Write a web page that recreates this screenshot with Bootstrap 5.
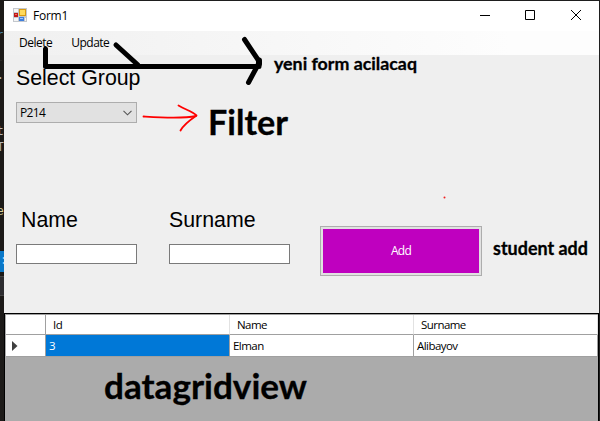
<!DOCTYPE html>
<html lang="az">
<head>
<meta charset="utf-8">
<meta name="viewport" content="width=device-width, initial-scale=1">
<title>Form1</title>
<link rel="stylesheet" href="https://cdn.jsdelivr.net/npm/bootstrap@5.3.0/dist/css/bootstrap.min.css">
<style>
body{width:600px;height:421px;background:#1e1e1e;color:#000;font-family:"Open Sans","Noto Sans",sans-serif;font-size:12px;line-height:16px}
.editor-strip{width:4px;padding-top:28px;background:#1c1a18;font:12px/16px "Liberation Mono",monospace;color:#b8b8b8}
.strip-line{height:16px;direction:rtl;overflow:hidden}
.strip-sel{height:21px;margin-top:31px;background:#0a78c8;color:#9cf;line-height:20px;overflow:hidden}
.strip-panel{height:20px;margin-top:4px;background:#2d2d30;border-top:1px solid #444;border-bottom:1px solid #444}
.win{width:595px;height:420px;margin-top:1px;background:#efefef}
.title-row{height:30px;padding:0 0 2px 9px}
.title-text{margin-left:6px;padding-top:1px;letter-spacing:-.25px}
.caption-btn{width:46px;height:28px}
.caption-btn:first-child{width:44px}
.menu-row{height:24px;padding-left:15px;background:linear-gradient(90deg,#f0f0f0,#fdfdfd 85%)}
.menu-row a{color:#000;letter-spacing:-.5px}
.menu-row a+a{margin-left:19px}
.form-area{height:258px;padding:10px 0 0 12px}
.lbl{font:21.33px/26px "Liberation Sans",Arial,sans-serif}
.combo{width:121px;height:21px;margin-top:11px;padding:0 4px 0 3px;background:#e1e1e1;border:1px solid #adadad;letter-spacing:-.65px}
.fields-row{margin-top:84px}
.field-col{width:121px}
.txt{display:block;width:121px;height:20px;margin-top:11px;border:1px solid #7a7a7a;background:#fff;padding:0}
.add-btn{width:162px;height:50px;margin:19px 0 0 30px;border:1px solid #adadad;border-radius:0;padding:2px;background:#e1e1e1}
.add-btn span{background:#bf00bf;color:#fff;font-size:12px;letter-spacing:-.8px}
.data-view{height:108px;background:#ababab;border:1px solid #000;border-bottom:0;padding-top:1px;box-shadow:inset 0 1px #a0a0a0}
.data-view table{width:592px;margin:0 0 0 1px;table-layout:fixed;border-collapse:separate;border-spacing:0;font-size:11.5px;letter-spacing:-.55px;background:#fff}
.data-view th,.data-view td{padding:0;font-weight:400;border:0 solid #a0a0a0;border-bottom-width:1px;line-height:19px}
.data-view th{height:20px;padding-left:7px;border-right:1px solid #e2e2e2}
.data-view th:first-child{border-right-color:#a0a0a0}
.data-view td{height:22px;line-height:21px;padding-left:3px;border-right-width:1px}
.data-view .row-mark{padding-left:6px}
.data-view .picked{background:#0078d7;color:#fff}
.notes{left:0;top:0;pointer-events:none}
.notes text{font-family:Lato,"Open Sans",sans-serif;font-weight:700;stroke:#000;stroke-width:.3px}
</style>
<script src="https://cdn.jsdelivr.net/npm/bootstrap@5.3.0/dist/js/bootstrap.bundle.min.js"></script>
</head>
<body class="d-flex position-relative overflow-hidden">
<aside class="editor-strip h-100 overflow-hidden flex-shrink-0">
  <div class="strip-line" style="color:#4d83a3">r</div>
  <div class="strip-line"></div>
  <div class="strip-line" style="line-height:0">-</div>
  <div class="strip-line" style="line-height:0">.</div>
  <div class="strip-line"></div><div class="strip-line"></div>
  <div class="strip-line">t</div>
  <div class="strip-line">T</div>
  <div class="strip-line"></div><div class="strip-line"></div><div class="strip-line"></div>
  <div class="strip-line" style="color:#d8cf9c">e</div>
  <div class="strip-sel">:</div>
  <div class="strip-panel"></div>
</aside>
<main class="win flex-shrink-0">
  <header class="title-row d-flex align-items-center bg-white">
    <svg width="14" height="14" viewBox="0 0 14 14"><path d="M0 0H14V14H0Z" fill="#c4c8cd"/><path d="M1 1H5V4H1ZM1 10H5V13H1ZM12 10H13V13H12Z" fill="#f5f5f5"/><path d="M6 1H13V8H6Z" fill="#d99b12"/><path d="M7 2H12V7H7Z" fill="#ffda5c"/><path d="M1 5H5V9H1Z" fill="#c01818"/><path d="M2 6H4V7H2Z" fill="#f07060"/><path d="M6 9H11V13H6Z" fill="#3f7fdc"/><path d="M7 10H10V11H7Z" fill="#9fc8ff"/></svg>
    <span class="title-text">Form1</span>
    <div class="d-flex ms-auto">
      <span class="caption-btn d-flex align-items-center justify-content-center"><svg width="10" height="10"><path d="M0 5.5H10" stroke="#000"/></svg></span>
      <span class="caption-btn d-flex align-items-center justify-content-center"><svg width="10" height="10"><path d="M.5 .5H9.5V9.5H.5Z" fill="none" stroke="#000"/></svg></span>
      <span class="caption-btn d-flex align-items-center justify-content-center"><svg width="10" height="10"><path d="M0 0L10 10M10 0L0 10" stroke="#000"/></svg></span>
    </div>
  </header>
  <nav class="menu-row d-flex align-items-center">
    <a class="text-decoration-none">Delete</a><a class="text-decoration-none">Update</a>
  </nav>
  <section class="form-area">
    <div class="lbl">Select Group</div>
    <div class="combo d-flex align-items-center justify-content-between"><span>P214</span><svg width="9" height="6"><path d="M.5 .8L4.5 4.8L8.5 .8" fill="none" stroke="#555" stroke-width="1.1"/></svg></div>
    <div class="fields-row d-flex align-items-start">
      <div class="field-col"><label class="lbl d-block" for="n" style="padding-left:5px">Name</label><input class="txt" id="n"></div>
      <div class="field-col" style="margin-left:32px"><label class="lbl d-block" for="s">Surname</label><input class="txt" id="s"></div>
      <button class="add-btn btn d-flex"><span class="flex-fill h-100 d-flex align-items-center justify-content-center">Add</span></button>
    </div>
  </section>
  <section class="data-view">
    <table>
      <colgroup><col style="width:40px"><col style="width:184px"><col style="width:184px"><col style="width:184px"></colgroup>
      <thead><tr><th></th><th>Id</th><th>Name</th><th>Surname</th></tr></thead>
      <tbody><tr><td class="row-mark"><svg class="d-block" width="6" height="10"><path d="M0 0L5.5 5L0 10Z" fill="#404040"/></svg></td><td class="picked">3</td><td>Elman</td><td>Alibayov</td></tr></tbody>
    </table>
  </section>
</main>
<svg class="notes position-absolute" width="600" height="421" viewBox="0 0 600 421">
  <g fill="none" stroke="#000" stroke-width="5" stroke-linecap="round" stroke-linejoin="round">
    <path d="M45.500 49V66.500H259"/><path d="M116 45L138 65"/><path d="M244.500 39.500L259.500 62L248.500 82.500"/><path d="M259 60.500V64" stroke-width="6"/>
  </g>
  <g fill="none" stroke="#f00" stroke-width="1.8" stroke-linecap="round" stroke-linejoin="round">
    <path d="M143.500 116.500C160 117.500 182 119 196 116"/><path d="M178.500 105.500C186 110 192 111 196.500 115.500C190 120 184 124 180.500 130.500"/>
  </g>
  <circle cx="444.500" cy="197.500" r="1" fill="#f02020"/>
  <text x="274" y="70" font-size="17.500" textLength="143" lengthAdjust="spacingAndGlyphs">yeni form acilacaq</text>
  <text x="208" y="135" font-size="34" textLength="80" lengthAdjust="spacingAndGlyphs">Filter</text>
  <text x="493" y="255" font-size="18" textLength="95" lengthAdjust="spacingAndGlyphs">student add</text>
  <text x="104" y="399" font-size="35" textLength="203" lengthAdjust="spacingAndGlyphs">datagridview</text>
</svg>
</body>
</html>
